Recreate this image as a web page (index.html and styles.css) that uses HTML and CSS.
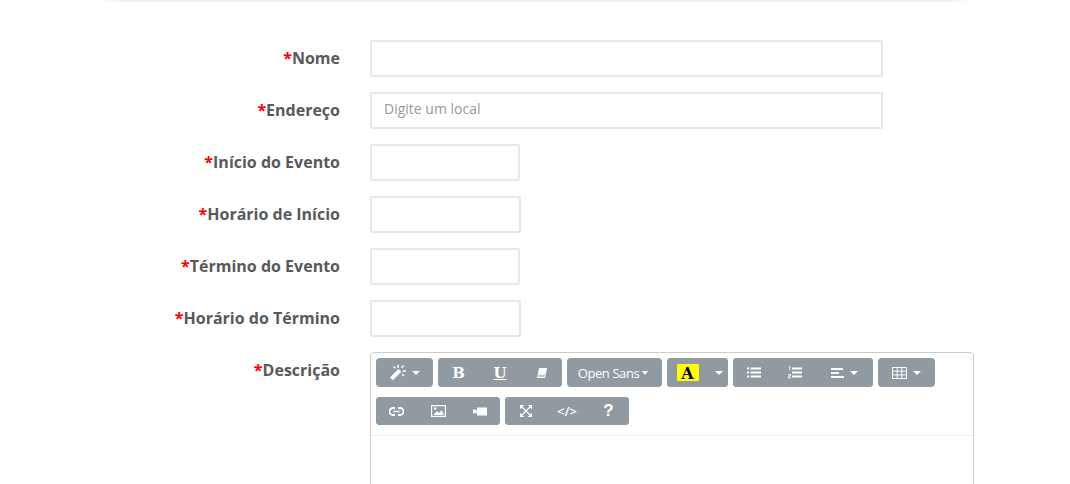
FILE: index.html
```html
<!DOCTYPE html>
<html lang="pt">
<head>
<meta charset="utf-8">
<title>Evento</title>
<link rel="stylesheet" href="styles.css">
</head>
<body>
<div class="page">
  <div class="top-rule"></div>
  <form class="form">
    <div class="row"><label class="label"><span class="req">*</span>Nome</label><input class="input wide" type="text"></div>
    <div class="row"><label class="label"><span class="req">*</span>Endereço</label><input class="input wide" type="text" placeholder="Digite um local"></div>
    <div class="row"><label class="label"><span class="req">*</span>Início do Evento</label><input class="input date" type="text"></div>
    <div class="row"><label class="label"><span class="req">*</span>Horário de Início</label><input class="input time" type="text"></div>
    <div class="row"><label class="label"><span class="req">*</span>Término do Evento</label><input class="input date" type="text"></div>
    <div class="row"><label class="label"><span class="req">*</span>Horário do Término</label><input class="input time" type="text"></div>
    <div class="row">
      <label class="label label-top"><span class="req">*</span>Descrição</label>
      <div class="editor">
        <div class="toolbar">
          <div class="tool-row first">
            <div class="group">
              <span class="btn w57">
                <svg class="ico" width="16" height="15" viewBox="0 0 16 15"><path d="M0 12.500 8.500 4l2.800 2.800L2.800 15.300z" fill="#fff"/><path d="M8 0v3M13.500.5l-2 2.200M3.500 1.500l1.800 1.800M16 6h-3.200M14 11l-1.800-1.800" stroke="#fff" stroke-width="1.500" fill="none"/></svg>
                <i class="caret"></i>
              </span>
            </div>
            <div class="group">
              <span class="btn w41 glyph-b">B</span>
              <span class="btn w41 glyph-u">U</span>
              <span class="btn w42">
                <svg class="ico" width="11" height="10" viewBox="0 0 11 10"><path d="M3 0h8L9 10H1z" fill="#fff"/><path d="M2.400 6.800 1.800 9h6.700l.5-2.200z" fill="#c3c8cc"/></svg>
              </span>
            </div>
            <div class="group">
              <span class="btn w95 font-name">Open Sans<i class="caret small"></i></span>
            </div>
            <div class="group">
              <span class="btn w41"><span class="swatch">A</span></span>
              <span class="btn w20"><i class="caret"></i></span>
            </div>
            <div class="group">
              <span class="btn w41">
                <svg class="ico" width="14" height="11" viewBox="0 0 14 11"><path d="M0 1.500h2M3.500 1.500H14M0 5.500h2M3.500 5.500H14M0 9.500h2M3.500 9.500H14" stroke="#fff" stroke-width="1.800"/></svg>
              </span>
              <span class="btn w41">
                <svg class="ico" width="14" height="13" viewBox="0 0 14 13"><path d="M4 2.500h10M4 6.500h10M4 10.500h10" stroke="#fff" stroke-width="1.800"/><path d="M.8.800 1.800.2v4M0 8.500h2.500v1.500H.3v1.800h2.700" stroke="#fff" stroke-width=".9" fill="none"/></svg>
              </span>
              <span class="btn w58">
                <svg class="ico" width="13" height="10" viewBox="0 0 13 10"><path d="M0 1h12M0 5h8M0 9h13" stroke="#fff" stroke-width="1.800"/></svg>
                <i class="caret"></i>
              </span>
            </div>
            <div class="group">
              <span class="btn w57">
                <svg class="ico" width="15" height="12" viewBox="0 0 15 12"><path d="M.5.500h14v11H.5zM.5 4.200h14M.5 7.900h14M5.200.500v11M9.800.500v11" stroke="#fff" stroke-width="1" fill="none"/></svg>
                <i class="caret"></i>
              </span>
            </div>
          </div>
          <div class="tool-row second">
            <div class="group">
              <span class="btn w41">
                <svg class="ico" width="15" height="9" viewBox="0 0 15 9"><path d="M6 1H4a3.500 3.500 0 0 0 0 7h2M9 1h2a3.500 3.500 0 0 1 0 7H9" fill="none" stroke="#fff" stroke-width="1.800"/><path d="M4.500 4.500h6" stroke="#fff" stroke-width="1.600"/></svg>
              </span>
              <span class="btn w41">
                <svg class="ico" width="15" height="12" viewBox="0 0 15 12"><rect x=".6" y=".6" width="13.800" height="10.800" fill="none" stroke="#fff" stroke-width="1.200"/><path d="M2.500 10 6 6l2 2 2.500-3L13 10z" fill="#fff"/><circle cx="4.200" cy="3.500" r="1.200" fill="#fff"/></svg>
              </span>
              <span class="btn w42">
                <svg class="ico" width="14" height="9" viewBox="0 0 14 9"><path d="M4 .5h10v8H4zM0 2.500h1.200L4 3.500v2L1.200 6.500H0z" fill="#fff"/></svg>
              </span>
            </div>
            <div class="group">
              <span class="btn w41">
                <svg class="ico" width="12" height="12" viewBox="0 0 12 12"><path d="M0 0h4.200L0 4.200zM12 0v4.200L7.800 0zM0 12V7.800L4.200 12zM12 12H7.800L12 7.800z" fill="#fff"/><path d="M2 2l8 8M10 2l-8 8" stroke="#fff" stroke-width="1.100"/></svg>
              </span>
              <span class="btn w41 glyph-code">&lt;/&gt;</span>
              <span class="btn w42 glyph-help">?</span>
            </div>
          </div>
        </div>
        <div class="editing"></div>
      </div>
    </div>
  </form>
</div>
</body>
</html>
```

FILE: styles.css
```css
html, body {
  margin: 0;
  padding: 0;
  background: #fff;
}

.page {
  height: 484px;
  overflow: hidden;
  font-family: "Open Sans", sans-serif;
  color: #58595b;
}

.top-rule {
  height: 2px;
  margin: 0 100px;
  background: linear-gradient(to right, #fff 0, #eef1f1 24px, #eef1f1 calc(100% - 24px), #fff 100%);
}

.form {
  display: flex;
  flex-direction: column;
  gap: 15px;
  padding-top: 38px;
}

.row {
  display: flex;
  align-items: flex-start;
}

.label {
  box-sizing: border-box;
  width: 340px;
  margin-right: 30px;
  text-align: right;
  font-size: 16px;
  font-weight: 700;
  line-height: 22px;
  padding-top: 7px;
  color: #58595b;
}

.label-top {
  padding-top: 7px;
}

.req {
  color: #f00;
}

.input {
  box-sizing: border-box;
  height: 37px;
  padding: 0 12px 4px;
  border: 2px solid #e6e9ec;
  border-radius: 2px;
  background: #fff;
  font-family: "Open Sans", sans-serif;
  font-size: 14px;
  color: #555;
  outline: none;
}

.input::placeholder {
  color: #999;
  opacity: 1;
}

.wide { width: 513px; }
.date { width: 150px; }
.time { width: 151px; }

.editor {
  box-sizing: border-box;
  width: 604px;
  height: 200px;
  border: 1px solid #ccc;
  border-radius: 4px;
  background: #fff;
}

.toolbar {
  box-sizing: border-box;
  height: 83px;
  padding: 5px 5px 0;
  border-bottom: 1px solid #eee;
}

.tool-row {
  display: flex;
  gap: 5px;
}

.first { height: 29px; margin-bottom: 10px; }
.second { height: 28px; }

.group {
  display: flex;
  height: 100%;
  border-radius: 4px;
  overflow: hidden;
  background: #929aa1;
}

.btn {
  box-sizing: border-box;
  display: flex;
  align-items: center;
  justify-content: center;
  gap: 6px;
  height: 100%;
  color: #fff;
  background: #929aa1;
  border-left: 1px solid #90989f;
}

.btn:first-child { border-left: 0; }

.w20 { width: 20px; }
.w41 { width: 41px; }
.w42 { width: 42px; }
.w57 { width: 57px; }
.w58 { width: 58px; }
.w95 { width: 95px; }

.ico { display: block; flex: none; }

.caret {
  display: block;
  flex: none;
  width: 0;
  height: 0;
  border-left: 4px solid transparent;
  border-right: 4px solid transparent;
  border-top: 4px solid #fff;
}

.caret.small {
  margin-left: -3px;
  border-left-width: 3.5px;
  border-right-width: 3.5px;
}

.glyph-b, .glyph-u {
  font-family: "DejaVu Serif", serif;
  font-size: 15px;
  font-weight: 700;
}

.glyph-u { text-decoration: underline; }

.font-name {
  padding-right: 3px;
  font-size: 13px;
  letter-spacing: -0.4px;
}

.swatch {
  display: block;
  width: 22px;
  height: 17px;
  background: #ff0;
  color: #000;
  font-family: "DejaVu Serif", serif;
  font-size: 16px;
  font-weight: 700;
  line-height: 19px;
  text-align: center;
}

.glyph-code {
  font-size: 13px;
  font-weight: 600;
}

.glyph-help {
  font-family: "Liberation Sans", sans-serif;
  font-size: 17px;
  font-weight: 700;
}

.editing { height: 100px; }
```
